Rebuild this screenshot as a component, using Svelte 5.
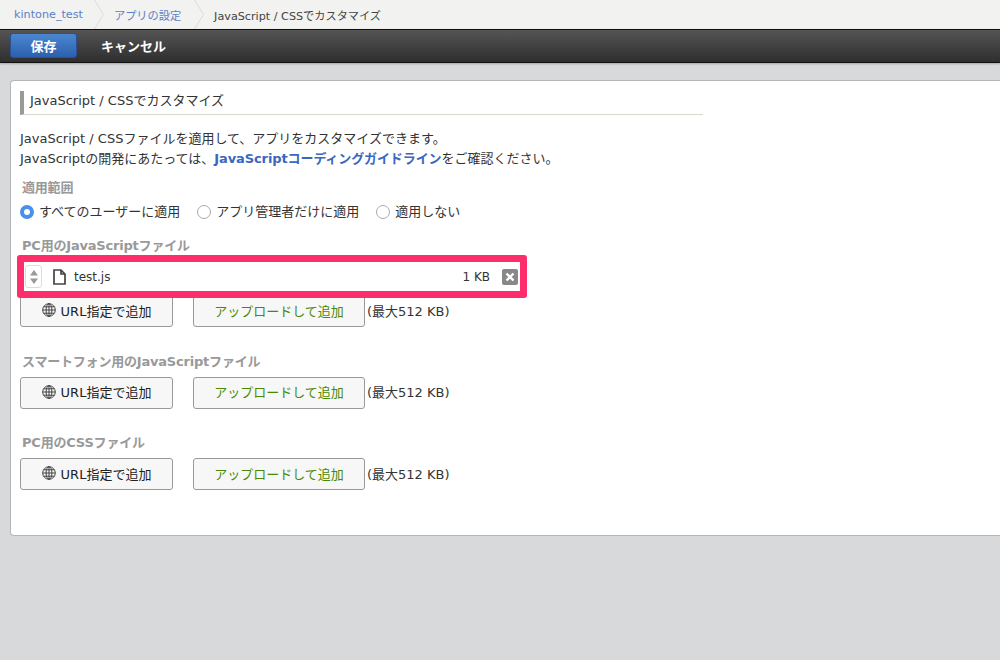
<script>
  const crumbs = [
    { label: 'kintone_test', link: true },
    { label: 'アプリの設定', link: true },
    { label: 'JavaScript / CSSでカスタマイズ', link: false }
  ];
  const scopes = [
    { label: 'すべてのユーザーに適用', on: true },
    { label: 'アプリ管理者だけに適用', on: false },
    { label: '適用しない', on: false }
  ];
  const sections = [
    { title: 'PC用のJavaScriptファイル', files: [{ name: 'test.js', size: '1 KB' }] },
    { title: 'スマートフォン用のJavaScriptファイル', files: [] },
    { title: 'PC用のCSSファイル', files: [] }
  ];
</script>

<div class="page">
  <nav class="crumbs">
    {#each crumbs as c, i}
      <span class="crumb" class:link={c.link} class:first={i === 0}>{c.label}</span>
      {#if i < crumbs.length - 1}
        <svg class="sep" width="10" height="29" viewBox="0 0 10 29"><path d="M0.5 0 L9.5 14.5 L0.5 29" fill="none" stroke="#dcdcd8" /></svg>
      {/if}
    {/each}
  </nav>

  <div class="toolbar">
    <button class="save" type="button">保存</button>
    <button class="cancel" type="button">キャンセル</button>
  </div>

  <main class="card">
    <h1 class="title">JavaScript / CSSでカスタマイズ</h1>
    <p class="desc">
      JavaScript / CSSファイルを適用して、アプリをカスタマイズできます。<br />
      JavaScriptの開発にあたっては、<a href="#guide" class="guide">JavaScriptコーディングガイドライン</a>をご確認ください。
    </p>

    <h2 class="label scope-label">適用範囲</h2>
    <div class="scopes">
      {#each scopes as s}
        <span class="scope">
          <span class="radio" class:on={s.on}></span>
          {s.label}
        </span>
      {/each}
    </div>

    {#each sections as sec}
      <section class="section">
        <h2 class="label">{sec.title}</h2>
        {#each sec.files as f}
          <div class="file">
            <span class="mark"></span>
            <span class="handle">
              <svg width="8" height="16" viewBox="0 0 8 16"><path d="M4 1 L8 6.5 H0 Z M4 15 L0 9.5 H8 Z" fill="#999" /></svg>
            </span>
            <svg class="doc" width="13" height="16" viewBox="0 0 13 16"><path d="M1 1 H8 L12 5 V15 H1 Z M8 1 V5 H12" fill="#fff" stroke="#444" stroke-width="1.7" /></svg>
            <span class="name">{f.name}</span>
            <span class="size">{f.size}</span>
            <span class="remove">
              <svg width="10" height="10" viewBox="0 0 10 10"><path d="M1.5 1.5 L8.5 8.5 M8.5 1.5 L1.5 8.5" stroke="#fff" stroke-width="2.4" /></svg>
            </span>
          </div>
        {/each}
        <div class="actions">
          <button class="btn url" type="button">
            <svg width="14" height="14" viewBox="0 0 14 14" fill="none" stroke="#333" stroke-width="0.9">
              <circle cx="7" cy="7" r="6.3" />
              <ellipse cx="7" cy="7" rx="2.9" ry="6.3" />
              <path d="M7 0.7 V13.3 M0.7 7 H13.3 M1.6 3.8 H12.4 M1.6 10.2 H12.4" />
            </svg>
            URL指定で追加
          </button>
          <button class="btn upload" type="button">アップロードして追加</button>
          <span class="limit">(最大512 KB)</span>
        </div>
      </section>
    {/each}
  </main>
</div>

<style>
  :global(body) {
    margin: 0;
    background: #d8d9da;
  }
  .page {
    width: 1000px;
    height: 660px;
    overflow: hidden;
    font-family: 'DejaVu Sans', 'Noto Sans CJK JP', sans-serif;
    font-size: 13px;
    color: #333;
    background: #d8d9da;
  }
  .crumbs {
    display: flex;
    align-items: center;
    height: 29px;
    background: #f2f2f0;
    font-size: 11.2px;
    color: #444;
  }
  .crumb { padding: 0 13px 0 10px; }
  .crumb.first { padding-left: 14px; padding-right: 11px; }
  .crumb.link { color: #5b7fc7; }
  .sep { flex: none; }
  .toolbar {
    display: flex;
    align-items: center;
    height: 31px;
    padding: 0 0 1px 10px;
    border-top: 1px solid #111;
    border-bottom: 1px solid #111;
    background: linear-gradient(#555, #2e2e2e);
    box-shadow: 0 1px 2px rgba(0, 0, 0, 0.25);
  }
  button { font-family: inherit; }
  .save {
    width: 67px;
    height: 25px;
    border: 1px solid #2c4f95;
    border-radius: 3px;
    background: linear-gradient(#4a87d0, #2d5fae);
    color: #fff;
    font-size: 13px;
    font-weight: bold;
    padding: 0;
  }
  .cancel {
    margin-left: 24px;
    border: 0;
    background: none;
    color: #fff;
    font-size: 13px;
    font-weight: bold;
    padding: 0;
  }
  .card {
    margin: 17px 0 0 10px;
    width: 1000px;
    height: 456px;
    box-sizing: border-box;
    padding: 10px 0 0 9px;
    background: #fff;
    border-radius: 4px;
    border: 1px solid #b5b5b5;
    border-right: 0;
  }
  .title {
    width: 673px;
    margin: 0;
    height: 23px;
    line-height: 20px;
    padding-left: 6px;
    border-left: 4px solid #999;
    border-bottom: 1px solid #d8d8d0;
    font-size: 13px;
    font-weight: normal;
    color: #333;
  }
  .desc {
    margin: 14px 0 0;
    line-height: 20px;
    font-size: 13px;
  }
  .guide {
    color: #3a67c0;
    font-weight: bold;
    text-decoration: none;
    letter-spacing: -0.1px;
  }
  .label {
    margin: 0 0 6px 2px;
    font-size: 13px;
    font-weight: bold;
    color: #999;
    line-height: 18px;
    letter-spacing: -0.2px;
  }
  .scope-label { margin: 10px 0 0 2px; }
  .scopes {
    display: flex;
    gap: 17px;
    margin-top: 6px;
    height: 18px;
    align-items: center;
    font-size: 13px;
    line-height: 18px;
  }
  .scope { display: flex; align-items: center; gap: 5px; }
  .radio {
    width: 12px;
    height: 12px;
    border: 1px solid #aaa;
    border-radius: 50%;
    background: #fff;
    box-sizing: content-box;
  }
  .radio.on {
    width: 6px;
    height: 6px;
    border: 4px solid #4a8fe8;
    background: #fff;
  }
  .section { margin-top: 16px; }
  .section + .section { margin-top: 25.5px; }
  .file {
    position: relative;
    display: flex;
    align-items: center;
    width: 500px;
    height: 30px;
    margin: 7px 0 3px;
    padding-right: 2px;
    font-size: 12px;
    box-sizing: border-box;
    border-bottom: 1px dotted #ccc;
  }
  .mark {
    position: absolute;
    left: -3px;
    top: -7px;
    width: 510px;
    height: 43px;
    box-sizing: border-box;
    border: 7px solid #fe2d6c;
    border-radius: 3px;
  }
  .handle {
    display: flex;
    align-items: center;
    justify-content: center;
    width: 17px;
    height: 23px;
    margin-left: 5px;
    border: 1px solid #ddd;
    border-radius: 3px;
    box-sizing: border-box;
  }
  .doc { margin-left: 11px; }
  .name { margin-left: 8px; flex: 1; }
  .size { margin-right: 12px; }
  .remove {
    display: flex;
    align-items: center;
    justify-content: center;
    width: 16px;
    height: 16px;
    background: #888;
    border-radius: 2px;
  }
  .actions {
    display: flex;
    align-items: center;
    height: 32px;
  }
  .btn {
    height: 32px;
    border: 1px solid #999;
    border-radius: 3px;
    background: #f7f7f7;
    font-size: 13px;
    padding: 0 0 2px;
  }
  .url {
    display: flex;
    align-items: center;
    justify-content: center;
    gap: 5px;
    width: 153px;
    color: #222;
  }
  .upload {
    width: 172px;
    margin-left: 20px;
    color: #4a8a00;
  }
  .limit { margin: 0 0 2px 2px; }
</style>
